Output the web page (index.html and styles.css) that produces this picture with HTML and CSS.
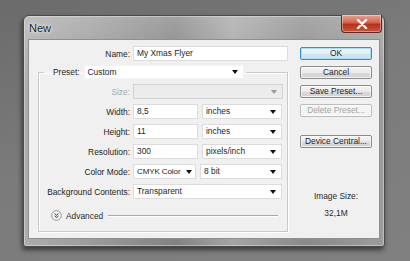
FILE: index.html
```html
<!DOCTYPE html>
<html lang="en">
  <head>
    <meta charset="UTF-8" />
    <meta name="viewport" content="width=device-width, initial-scale=1.0" />
    <title>New</title>
    <link rel="stylesheet" href="styles.css">
  </head>
  <body>
    <!-- Finestra di dialogo "New" -->
    <div class="window">
      <div class="titlebar">
        <span class="title">New</span>
        <button class="close" aria-label="Close">
          <svg width="12" height="10" viewBox="0 0 12 10">
            <path d="M2 1 L10 9 M10 1 L2 9" stroke="#fff" stroke-width="2.4" stroke-linecap="round" />
          </svg>
        </button>
      </div>

      <div class="content">
        <div class="form">
          <div class="row name-row">
            <label class="label">Name:</label>
            <div class="field name-field">My Xmas Flyer</div>
          </div>

          <fieldset class="group">
            <legend class="preset">
              <span class="preset-label">Preset:</span>
              <div class="select preset-select">Custom</div>
            </legend>

            <div class="row">
              <label class="label disabled">Size:</label>
              <div class="select disabled size-select"></div>
            </div>
            <div class="row">
              <label class="label">Width:</label>
              <div class="field num-field">8,5</div>
              <div class="select unit-select">inches</div>
            </div>
            <div class="row">
              <label class="label">Height:</label>
              <div class="field num-field">11</div>
              <div class="select unit-select">inches</div>
            </div>
            <div class="row">
              <label class="label">Resolution:</label>
              <div class="field num-field">300</div>
              <div class="select unit-select">pixels/inch</div>
            </div>
            <div class="row">
              <label class="label">Color Mode:</label>
              <div class="select mode-select">CMYK Color</div>
              <div class="select bit-select">8 bit</div>
            </div>
            <div class="row">
              <label class="label">Background Contents:</label>
              <div class="select bg-select">Transparent</div>
            </div>

            <div class="advanced">
              <span class="adv-icon">
                <svg width="11" height="11" viewBox="0 0 11 11">
                  <circle cx="5.5" cy="5.5" r="4.8" fill="#f4f4f4" stroke="#8a8a8a" stroke-width="0.9" />
                  <path d="M3.6 3.6 L5.5 5.2 L7.4 3.6 M3.6 5.9 L5.5 7.5 L7.4 5.9" fill="none" stroke="#333" stroke-width="1" />
                </svg>
              </span>
              <span class="adv-text">Advanced</span>
              <span class="adv-line"></span>
            </div>
          </fieldset>
        </div>

        <!-- Colonna dei pulsanti -->
        <div class="actions">
          <button class="btn btn-default">OK</button>
          <button class="btn">Cancel</button>
          <button class="btn">Save Preset...</button>
          <button class="btn" disabled>Delete Preset...</button>
          <button class="btn btn-device">Device Central...</button>
          <div class="image-size">
            <p>Image Size:</p>
            <p>32,1M</p>
          </div>
        </div>
      </div>
    </div>
  </body>
</html>
```

FILE: styles.css
```css
html,
body {
  margin: 0;
  padding: 0;
  width: 100%;
  height: 100%;
  overflow: hidden;
}

body {
  padding: 15px 0 0 23px;
  box-sizing: border-box;
  background: linear-gradient(160deg, #6b6b6b 0%, #7b7b7b 45%, #808080 100%);
  font-family: "Liberation Sans", Arial, sans-serif;
  font-size: 8.4px;
  color: #1e1e1e;
}

/* Finestra */
.window {
  width: 362px;
  height: 232px;
  box-sizing: border-box;
  display: flex;
  flex-direction: column;
  border: 1px solid #4c4c4c;
  border-radius: 6px 6px 3px 3px;
  background:
    linear-gradient(180deg, rgba(255, 255, 255, 0.25) 0%, rgba(255, 255, 255, 0) 30%),
    linear-gradient(90deg, #adadad 0%, #9c9c9c 18%, #828282 42%, #a5a5a5 58%, #8a8a8a 78%, #9c9c9c 100%);
  box-shadow: -1px 3px 5px rgba(0, 0, 0, 0.55), inset 0 0 0 1px rgba(255, 255, 255, 0.35);
}

.titlebar {
  height: 23px;
  display: flex;
  align-items: flex-start;
  justify-content: space-between;
}

.title {
  margin: 6px 0 0 5px;
  font-size: 11px;
  color: #1c1c1c;
  text-shadow: 0 0 4px rgba(255, 255, 255, 0.9), 0 0 2px rgba(255, 255, 255, 0.8);
}

.close {
  width: 41px;
  height: 18px;
  margin: -1px 2px 0 0;
  padding: 0;
  display: flex;
  align-items: center;
  justify-content: center;
  border: 1px solid #5e2a22;
  border-top: none;
  border-radius: 0 0 4px 4px;
  background: linear-gradient(180deg, #e7a496 0%, #d3644d 45%, #b8311c 55%, #c9553a 100%);
  box-shadow: inset 0 0 0 1px rgba(255, 255, 255, 0.35);
}

/* Area del contenuto */
.content {
  flex: 1;
  margin: 0 4px 7px 4px;
  display: flex;
  gap: 12px;
  background-color: #f0f0f0;
  border: 1px solid #8f8f8f;
}

.form {
  width: 259px;
  padding-top: 6px;
}

.row {
  display: flex;
  align-items: center;
  gap: 3px;
  height: 15px;
}

.label {
  width: 91px;
  flex: none;
  text-align: right;
  white-space: nowrap;
}

.label.disabled {
  color: #a8a8a8;
}

.name-row .label {
  width: 101px;
}

.field,
.select {
  height: 15px;
  box-sizing: border-box;
  padding: 0 3px;
  line-height: 13px;
  background-color: #fff;
  border: 1px solid #dcdcdc;
  white-space: nowrap;
}

.name-field {
  width: 155px;
}

.num-field {
  width: 65px;
}

.select {
  position: relative;
}

/* Freccia della tendina */
.select::after {
  content: "";
  position: absolute;
  right: 5px;
  top: 5px;
  border-left: 3.5px solid transparent;
  border-right: 3.5px solid transparent;
  border-top: 4px solid #111;
}

.select.disabled {
  background-color: #ececec;
  border-color: #d2d2d2;
}

.select.disabled::after {
  border-top-color: #9a9a9a;
}

.unit-select {
  width: 80px;
  margin-left: 1px;
}

.size-select {
  width: 150px;
}

.mode-select {
  width: 63px;
  font-size: 8px;
  letter-spacing: -0.1px;
}

.mode-select::after {
  right: 3px;
}

.bit-select {
  width: 82px;
  margin-left: 1px;
}

.bg-select {
  width: 149px;
}

/* Gruppo Preset */
.group {
  width: 250px;
  box-sizing: border-box;
  margin: 4px 0 0 9px;
  padding: 5px 0 10px 0;
  border: 1px solid #c9c9c9;
  box-shadow: 1px 1px 0 #fff, inset 1px 1px 0 #fff;
}

.group .row + .row {
  margin-top: 5px;
}

.preset {
  margin-left: 5px;
  padding: 0 2px 0 9px;
  display: flex;
  align-items: center;
  height: 14px;
}

.preset-label {
  margin-right: 4px;
}

.preset-select {
  width: 160px;
  height: 14px;
  line-height: 12px;
  border-color: #f2f2f2;
}

.preset-select::after {
  top: 4px;
}

/* Riga Advanced */
.advanced {
  display: flex;
  align-items: center;
  height: 11px;
  margin: 11px 9px 0 12px;
}

.adv-icon {
  display: flex;
  width: 11px;
  height: 11px;
}

.adv-text {
  margin-left: 4px;
  color: #2a2a2a;
}

.adv-line {
  flex: 1;
  margin-left: 5px;
  border-top: 1px solid #a9a9a9;
  box-shadow: 0 1px 0 #fff;
}

/* Pulsanti */
.actions {
  width: 72px;
  padding-top: 7px;
  display: flex;
  flex-direction: column;
}

.btn {
  height: 13px;
  margin-bottom: 6px;
  padding: 0;
  font-family: inherit;
  font-size: 8.4px;
  line-height: 11px;
  color: #1e1e1e;
  background: linear-gradient(180deg, #f6f6f6 0%, #e9e9e9 50%, #dadada 51%, #d2d2d2 100%);
  border: 1px solid #8b8b8b;
  border-radius: 2px;
  box-shadow: inset 0 0 0 1px rgba(255, 255, 255, 0.7);
}

.btn-default {
  border-color: #3d8ec0;
  box-shadow: inset 0 0 0 1px #a8def6;
  background: linear-gradient(180deg, #f1f8fc 0%, #e3f0f8 50%, #d0e5f2 51%, #cde2ef 100%);
}

.btn:disabled {
  color: #a6a6a6;
  border-color: #bcbcbc;
  background: #f4f4f4;
}

.btn-device {
  margin-top: 12px;
}

.image-size {
  margin-top: 37px;
  text-align: center;
}

.image-size p {
  margin: 0 0 6px 0;
  line-height: 11px;
  color: #2a2a2a;
}
```
